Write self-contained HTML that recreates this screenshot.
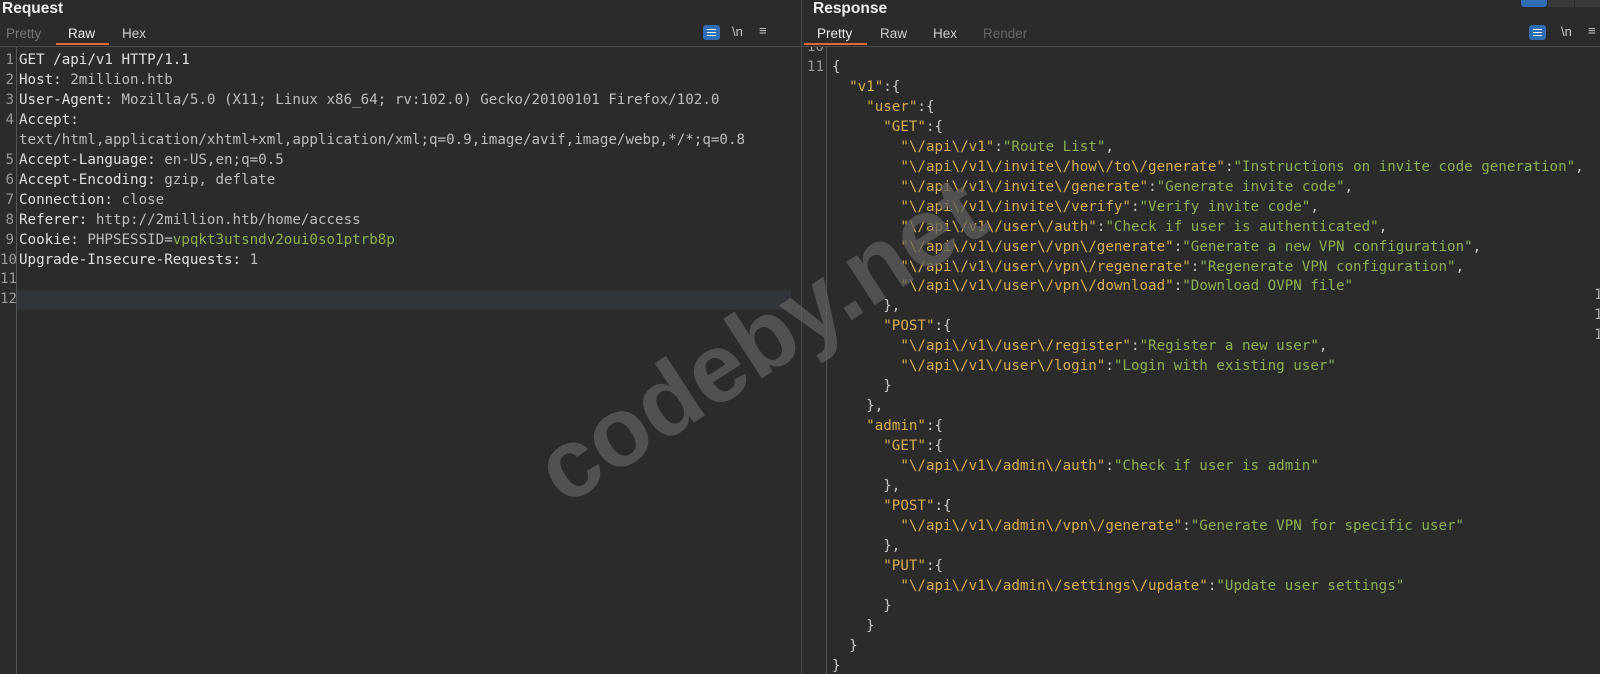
<!DOCTYPE html>
<html><head><meta charset="utf-8"><style>
*{margin:0;padding:0;box-sizing:border-box}
body{width:1600px;height:674px;background:#2b2b2b;overflow:hidden;position:relative;font-family:"Liberation Sans",sans-serif;color:#ddd}
.title{position:absolute;top:0;font-weight:bold;font-size:15.5px;color:#eee}
.tabs{position:absolute;top:24px;height:22px;font-size:13.5px}
.tabs span{position:absolute;top:2px}
.ul{position:absolute;top:19px;height:2px;background:#e0683a}
.sep{position:absolute;top:46px;height:1px;background:#4a4a4a}
.code{position:absolute;font-family:"DejaVu Sans Mono",monospace;font-size:14.2px;line-height:19.95px;white-space:pre;overflow:hidden}
.gut{position:absolute;font-family:"DejaVu Sans Mono",monospace;font-size:14.2px;line-height:19.95px;white-space:pre;color:#999;text-align:right}
.k{color:#d8ae4e}.v{color:#8cb050}.p{color:#c8c8c8}.h{color:#e0e0e0}.g{color:#bdbdbd}
.wrapbtn{position:absolute;width:17px;height:15px;background:#2f6db5;border-radius:3px}
.ico{position:absolute;font-size:13px;color:#ccc}
</style></head><body>
<div class="title" style="left:2px">Request</div>
<div class="tabs" style="left:0;width:800px">
<span style="left:6px;color:#777">Pretty</span>
<span style="left:68px;color:#eee">Raw</span>
<span style="left:122px;color:#ccc">Hex</span>
<div class="ul" style="left:56px;width:53px"></div>
</div>
<div class="wrapbtn" style="left:703px;top:25px"></div>
<div style="position:absolute;left:707px;top:29px;width:9px;height:1px;background:#fff;box-shadow:0 3px 0 #fff,0 6px 0 #fff"></div>
<div class="ico" style="left:732px;top:24px">\n</div>
<div class="ico" style="left:759px;top:23px">≡</div>
<div class="sep" style="left:0;width:801px"></div>
<div style="position:absolute;left:16px;top:47px;width:1px;height:627px;background:#555"></div>
<div style="position:absolute;left:17px;top:290px;width:774px;height:20px;background:#313539"></div>
<div class="gut" style="left:0;top:51px;width:14px">1
2
3
4

5
6
7
8
9
10
11
12</div>
<div class="code" style="left:19px;top:51px;width:775px"><span class="h">GET /api/v1 HTTP/1.1</span>
<span class="h">Host:</span><span class="g"> 2million.htb</span>
<span class="h">User-Agent:</span><span class="g"> Mozilla/5.0 (X11; Linux x86_64; rv:102.0) Gecko/20100101 Firefox/102.0</span>
<span class="h">Accept:</span>
<span class="g">text/html,application/xhtml+xml,application/xml;q=0.9,image/avif,image/webp,*/*;q=0.8</span>
<span class="h">Accept-Language:</span><span class="g"> en-US,en;q=0.5</span>
<span class="h">Accept-Encoding:</span><span class="g"> gzip, deflate</span>
<span class="h">Connection:</span><span class="g"> close</span>
<span class="h">Referer:</span><span class="g"> http://2million.htb/home/access</span>
<span class="h">Cookie:</span><span class="g"> PHPSESSID=</span><span class="v">vpqkt3utsndv2oui0so1ptrb8p</span>
<span class="h">Upgrade-Insecure-Requests:</span><span class="g"> 1</span></div>

<div style="position:absolute;left:801px;top:0;width:1px;height:674px;background:#4a4a4a"></div>
<div class="title" style="left:813px">Response</div>
<div class="tabs" style="left:802px;width:798px">
<span style="left:15px;color:#eee">Pretty</span>
<span style="left:78px;color:#ccc">Raw</span>
<span style="left:131px;color:#ccc">Hex</span>
<span style="left:181px;color:#666">Render</span>
<div class="ul" style="left:2px;width:63px"></div>
</div>
<div style="position:absolute;left:1521px;top:0;width:26px;height:7px;background:#2f6db5;border-radius:0 0 3px 3px"></div>
<div style="position:absolute;left:1548px;top:0;width:26px;height:7px;background:#3a3a3a"></div>
<div style="position:absolute;left:1575px;top:0;width:25px;height:7px;background:#3a3a3a"></div>
<div class="wrapbtn" style="left:1529px;top:25px"></div>
<div style="position:absolute;left:1533px;top:29px;width:9px;height:1px;background:#fff;box-shadow:0 3px 0 #fff,0 6px 0 #fff"></div>
<div class="ico" style="left:1561px;top:24px">\n</div>
<div class="ico" style="left:1588px;top:23px">≡</div>
<div class="sep" style="left:802px;width:798px"></div>
<div style="position:absolute;left:826px;top:47px;width:1px;height:627px;background:#555"></div>
<div style="position:absolute;left:802px;top:47px;width:24px;height:627px;overflow:hidden">
<div class="gut" style="left:0;top:-9px;width:22px">10
11</div></div>
<div style="position:absolute;left:1594px;top:47px;width:6px;height:627px;overflow:hidden">
<div class="gut" style="left:0;top:239px;text-align:left;color:#aaa">1
1
1</div></div>
<div style="position:absolute;left:832px;top:47px;width:762px;height:627px;overflow:hidden">
<div class="code" style="left:0;top:11px;width:762px"><span class="p">{</span>
  <span class="k">"v1"</span><span class="p">:{</span>
    <span class="k">"user"</span><span class="p">:{</span>
      <span class="k">"GET"</span><span class="p">:{</span>
        <span class="k">"\/api\/v1"</span><span class="p">:</span><span class="v">"Route List"</span><span class="p">,</span>
        <span class="k">"\/api\/v1\/invite\/how\/to\/generate"</span><span class="p">:</span><span class="v">"Instructions on invite code generation"</span><span class="p">,</span>
        <span class="k">"\/api\/v1\/invite\/generate"</span><span class="p">:</span><span class="v">"Generate invite code"</span><span class="p">,</span>
        <span class="k">"\/api\/v1\/invite\/verify"</span><span class="p">:</span><span class="v">"Verify invite code"</span><span class="p">,</span>
        <span class="k">"\/api\/v1\/user\/auth"</span><span class="p">:</span><span class="v">"Check if user is authenticated"</span><span class="p">,</span>
        <span class="k">"\/api\/v1\/user\/vpn\/generate"</span><span class="p">:</span><span class="v">"Generate a new VPN configuration"</span><span class="p">,</span>
        <span class="k">"\/api\/v1\/user\/vpn\/regenerate"</span><span class="p">:</span><span class="v">"Regenerate VPN configuration"</span><span class="p">,</span>
        <span class="k">"\/api\/v1\/user\/vpn\/download"</span><span class="p">:</span><span class="v">"Download OVPN file"</span>
      <span class="p">},</span>
      <span class="k">"POST"</span><span class="p">:{</span>
        <span class="k">"\/api\/v1\/user\/register"</span><span class="p">:</span><span class="v">"Register a new user"</span><span class="p">,</span>
        <span class="k">"\/api\/v1\/user\/login"</span><span class="p">:</span><span class="v">"Login with existing user"</span>
      <span class="p">}</span>
    <span class="p">},</span>
    <span class="k">"admin"</span><span class="p">:{</span>
      <span class="k">"GET"</span><span class="p">:{</span>
        <span class="k">"\/api\/v1\/admin\/auth"</span><span class="p">:</span><span class="v">"Check if user is admin"</span>
      <span class="p">},</span>
      <span class="k">"POST"</span><span class="p">:{</span>
        <span class="k">"\/api\/v1\/admin\/vpn\/generate"</span><span class="p">:</span><span class="v">"Generate VPN for specific user"</span>
      <span class="p">},</span>
      <span class="k">"PUT"</span><span class="p">:{</span>
        <span class="k">"\/api\/v1\/admin\/settings\/update"</span><span class="p">:</span><span class="v">"Update user settings"</span>
      <span class="p">}</span>
    <span class="p">}</span>
  <span class="p">}</span>
<span class="p">}</span></div></div>

<div style="position:absolute;left:560px;top:425px;font-family:'Liberation Sans',sans-serif;font-weight:bold;font-size:98px;line-height:98px;color:rgba(95,95,95,0.75);transform:rotate(-33deg);transform-origin:0 75px;white-space:nowrap">codeby.net</div>
</body></html>
